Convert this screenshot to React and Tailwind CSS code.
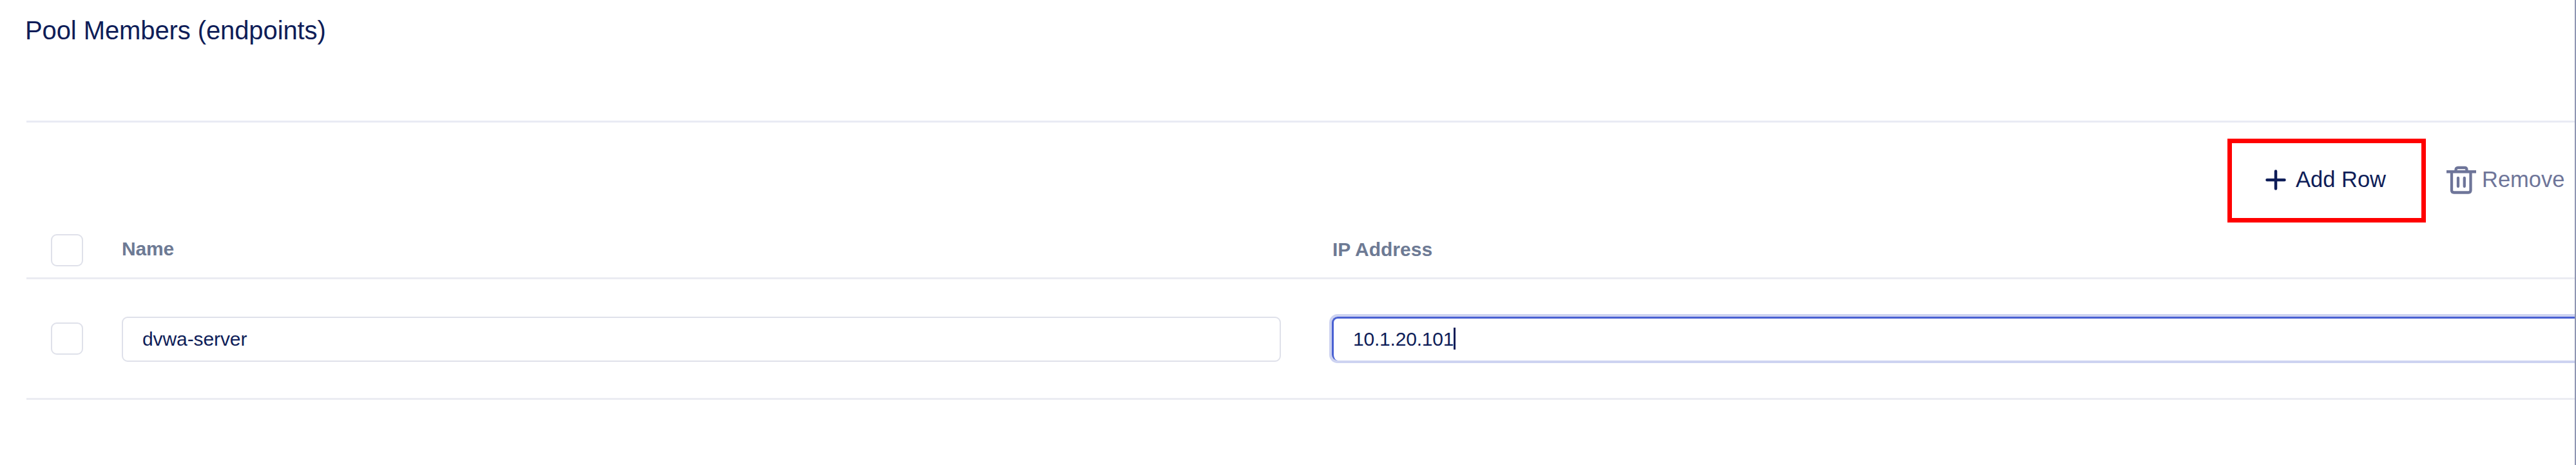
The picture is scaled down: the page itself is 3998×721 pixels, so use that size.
const Checkbox = () => (
  <span className="block size-[50px] shrink-0 rounded-[9px] border-2 border-[#dfe1ea] bg-white" />
);

function PlusIcon() {
  return (
    <svg width="32" height="32" viewBox="0 0 32 32" fill="none" stroke="#0e1d58" strokeWidth="4.5" strokeLinecap="round">
      <path d="M16 2.500V29.500M2.500 16H29.500" />
    </svg>
  );
}

function TrashIcon() {
  return (
    <svg width="46" height="46" viewBox="0 0 46 46" fill="none" stroke="#6e7599" strokeWidth="4.3">
      <path d="M0 10.200H46" strokeWidth="4.500" />
      <path d="M14.500 9.500V7.500Q14.500 4 18 4H28Q31.500 4 31.500 7.500V9.500" />
      <path d="M8 10.500V39Q8 42.500 11.500 42.500H34Q37.500 42.500 37.500 39V10.500" />
      <path d="M18 20V33M27.800 20V33" strokeLinecap="round" />
    </svg>
  );
}

export default function App() {
  return (
    <div className="flex h-[721px] w-[3998px] flex-col overflow-hidden border-r-2 border-[#8f96b2] bg-white pl-[41px] font-['Liberation_Sans',Arial,sans-serif] text-[#0e1d58]">
      <header className="flex h-[190px] items-start border-b-[3px] border-[#e9ebf4] pt-[24px]">
        <h1 className="-ml-[2px] text-[40px] leading-[46px] tracking-[-0.1px]">Pool Members (endpoints)</h1>
      </header>
      <div className="flex h-[155px] items-start justify-end pt-[25px] text-[34.5px]">
        <button className="flex h-[130px] w-[308px] items-center gap-[15px] border-[7px] border-[#ff0000] pb-[2px] pl-[52px]">
          <PlusIcon />
          <span className="whitespace-nowrap">Add Row</span>
        </button>
        <button className="flex h-[130px] w-[231px] items-center gap-[9px] pb-[2px] pl-[32px] text-[#6e7599]">
          <TrashIcon />
          <span>Remove</span>
        </button>
      </div>
      <div className="flex h-[88px] items-center border-b-[3px] border-[#ebecf2] pl-[38px] text-[30px] font-bold text-[#6d7a94]">
        <Checkbox />
        <span className="ml-[60px] w-[1879px] pb-[4px] tracking-[-0.2px]">Name</span>
        <span className="pb-[3px]">IP Address</span>
      </div>
      <div className="flex h-[187px] items-start border-b-[3px] border-[#ebecf2] pl-[38px] pt-[58px] text-[30px]">
        <div className="mt-[9px]">
          <Checkbox />
        </div>
        <div className="ml-[60px] flex h-[70px] w-[1799px] items-center rounded-[9px] border-2 border-[#dfe1ea] pb-[2px] pl-[30px] tracking-[-0.1px]">dvwa-server</div>
        <div className="ml-[79px] flex h-[68px] flex-1 items-center rounded-l-[9px] border-[3px] border-r-0 border-b-0 border-[#4a61d2] pb-[3px] pl-[30px] tracking-[-0.2px] ring-4 ring-[#cdd3f1]">
          10.1.20.101
          <span className="h-[34px] w-[3px] bg-[#0e1d58]" />
        </div>
      </div>
    </div>
  );
}
